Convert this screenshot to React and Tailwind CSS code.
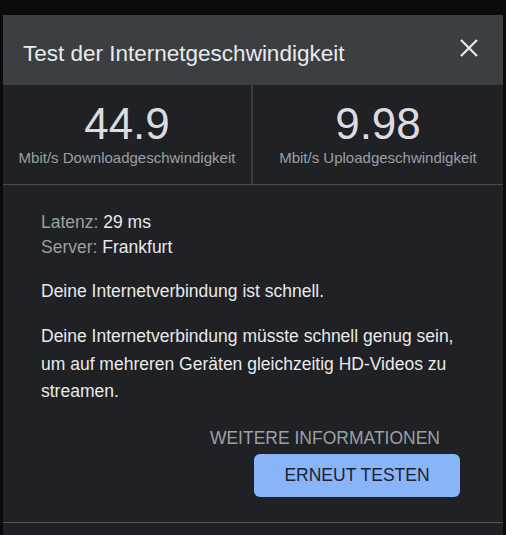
import React from "react";

export default function App() {
  const stats = [
    { value: "44.9", label: "Mbit/s Downloadgeschwindigkeit" },
    { value: "9.98", label: "Mbit/s Uploadgeschwindigkeit" },
  ];

  return (
    <div
      className="h-[535px] w-[506px] overflow-hidden bg-[#0b0b0c] pt-[15px] pl-[3px]"
      style={{ fontFamily: '"Liberation Sans", Arial, sans-serif' }}
    >
      <div className="w-[500px] h-[540px] bg-[#202124] flex flex-col">
        {/* header */}
        <div className="h-[70px] shrink-0 bg-[#3c3f42] flex items-center justify-between pl-[20px] pr-[24px]">
          <h1 className="text-[22.5px] text-[#e8eaed] pt-[7px]">
            Test der Internetgeschwindigkeit
          </h1>
          <button className="text-[#e8eaed] -mt-[5px]">
            <svg width="20" height="20" viewBox="0 0 20 20">
              <path
                d="M2 2 L18 18 M18 2 L2 18"
                stroke="currentColor"
                strokeWidth="2.2"
              />
            </svg>
          </button>
        </div>

        {/* stats */}
        <div className="grid grid-cols-2 h-[100px] shrink-0 border-b border-[#4a4c50]">
          {stats.map((s, i) => (
            <div
              key={s.label}
              className={
                "flex flex-col items-center pt-[15px] " +
                (i === 0 ? "border-r-2 border-[#3a3c40]" : "")
              }
            >
              <div className="text-[44px] leading-[48px] text-[#dadce0]">
                {s.value}
              </div>
              <div className="text-[15px] leading-[18px] text-[#9aa0a6] mt-[1px]">
                {s.label}
              </div>
            </div>
          ))}
        </div>

        {/* body */}
        <div className="h-[337px] shrink-0 flex flex-col px-[38px] pt-[25px] text-[17.5px] text-[#e8eaed]">
          <div className="leading-[25px]">
            <div>
              <span className="text-[#9aa0a6]">Latenz: </span>29 ms
            </div>
            <div>
              <span className="text-[#9aa0a6]">Server: </span>Frankfurt
            </div>
          </div>
          <p className="mt-[19px] leading-[25px]">
            Deine Internetverbindung ist schnell.
          </p>
          <p className="mt-[19px] leading-[27.5px]">
            Deine Internetverbindung müsste schnell genug sein, um auf mehreren
            Geräten gleichzeitig HD-Videos zu streamen.
          </p>
          <div className="flex flex-col items-end mt-[22px]">
            <a className="text-[#9aa0a6] leading-[20px] mr-[25px]">
              WEITERE INFORMATIONEN
            </a>
            <button className="mt-[6px] mr-[5px] w-[206px] h-[43px] rounded-[6px] bg-[#8ab4f8] text-[#1b2234] text-[17.5px]">
              ERNEUT TESTEN
            </button>
          </div>
        </div>

        <div className="h-[1px] shrink-0 bg-[#55575b]" />
      </div>
    </div>
  );
}
